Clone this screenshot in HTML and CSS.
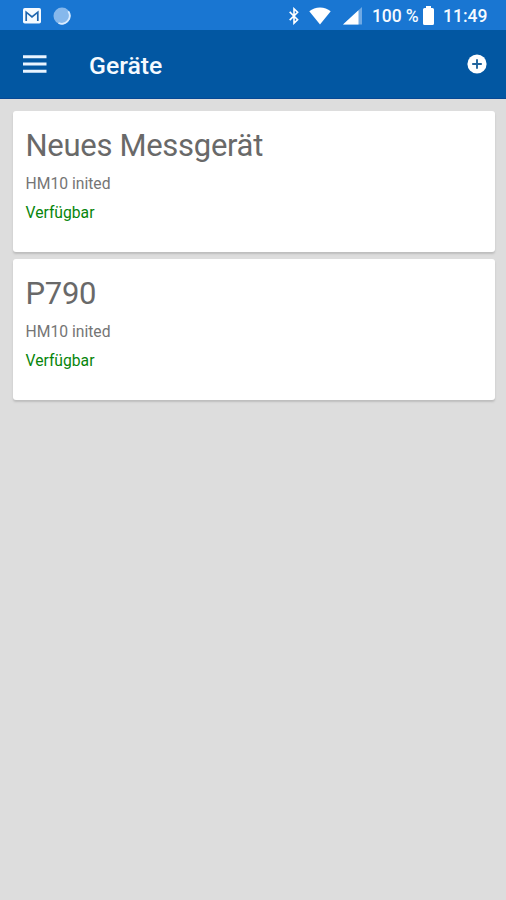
FILE: index.html
```html
<!DOCTYPE html>
<html lang="de">
<head>
<meta charset="utf-8">
<title>Geräte</title>
<link rel="stylesheet" href="styles.css">
</head>
<body>
<div class="status">
  <svg class="mail" width="18" height="16" viewBox="0 0 18 16"><rect width="18" height="15.5" rx="1.8" fill="#f5faff"/><path d="M3.200 13V4.200L9 8.800l5.800-4.600V13" fill="none" stroke="#1e65ae" stroke-width="1.700"/></svg>
  <svg class="sync" width="18" height="18" viewBox="0 0 18 18"><circle cx="9" cy="9" r="8.500" fill="#86b8ec"/><path d="M15.300 4.200A8 8 0 0 1 5.500 16" fill="none" stroke="#d9ebff" stroke-width="1.800"/></svg>
  <span class="space"></span>
  <svg class="bluetooth" width="12" height="18" viewBox="0 0 12 20"><path d="M1.200 5.500 10 14.200 6 18V2l4 3.800-8.800 8.700" fill="none" stroke="#fff" stroke-width="1.800"/></svg>
  <svg class="wifi" width="22" height="18" viewBox="0 0 22 18"><path d="M11 17.500.3 4.300Q4.800.5 11 .5t10.700 3.800z" fill="#fff"/></svg>
  <svg class="signal" width="19" height="18" viewBox="0 0 19 18"><path d="M0 17.500 19 0v17.500z" fill="#6fa9e4"/><path d="M0 17.500 15.500 3.300v14.200z" fill="#fff"/></svg>
  <span class="percent">100 %</span>
  <svg class="battery" width="11" height="19" viewBox="0 0 11 19"><path d="M3 0h5v2h1.500Q11 2 11 3.500v14Q11 19 9.500 19h-8Q0 19 0 17.500v-14Q0 2 1.500 2H3z" fill="#fff"/></svg>
  <span class="clock">11:49</span>
</div>
<header class="appbar">
  <svg class="menu" width="24" height="18" viewBox="0 0 24 18"><path d="M0 1.700h23.500M0 9h23.500M0 16.300h23.500" stroke="#e9f4ff" stroke-width="2.900"/></svg>
  <h1>Geräte</h1>
  <svg class="add" width="20" height="20" viewBox="0 0 20 20"><circle cx="10" cy="10" r="9.600" fill="#fff"/><path d="M10 5.200v9.600M5.200 10h9.600" stroke="#21649d" stroke-width="1.900"/></svg>
</header>
<main>
  <section class="card"><h2>Neues Messgerät</h2><p>HM10 inited</p><p class="available">Verfügbar</p></section>
  <section class="card"><h2>P790</h2><p>HM10 inited</p><p class="available">Verfügbar</p></section>
</main>
</body>
</html>
```
FILE: styles.css
```css
* { box-sizing: border-box; }
body { margin: 0; min-height: 900px; background: #ddd; font-family: Roboto, "Liberation Sans", sans-serif; }
svg { display: block; flex: none; }
.status { display: flex; align-items: center; height: 30px; padding: 1px 18px 0 23px; background: #1976d2; color: #f5faff; font-size: 17.5px; font-weight: 500; line-height: 30px; white-space: nowrap; }
.sync { margin-left: 12px; }
.space { flex: 1; }
.wifi { margin-left: 9px; }
.signal { margin-left: 12px; }
.percent { width: 47px; margin-left: 10px; letter-spacing: -.1px; }
.battery { margin-left: 4px; }
.clock { width: 45px; margin-left: 9px; }
.appbar { display: flex; align-items: center; height: 69px; padding: 0 19px 0 23px; background: #0257a2; border-bottom: 1px solid #074894; color: #f5faff; }
h1 { flex: 1; margin: 4px 0 0 42px; font-size: 24.8px; font-weight: 500; line-height: 32px; }
main { display: flex; flex-direction: column; gap: 7px; padding: 12px 11.5px 0 12.5px; }
.card { height: 141px; padding: 16px 13px; border-radius: 3px; background: #fff; box-shadow: 0 2px 2px #bdbdbd; }
h2 { margin: 0; color: #696969; font-size: 31px; font-weight: 400; line-height: 38px; letter-spacing: -.3px; }
p { margin: 9px 0 0; color: #757575; font-size: 15.7px; line-height: 20px; }
.available { color: #07850b; }
```
